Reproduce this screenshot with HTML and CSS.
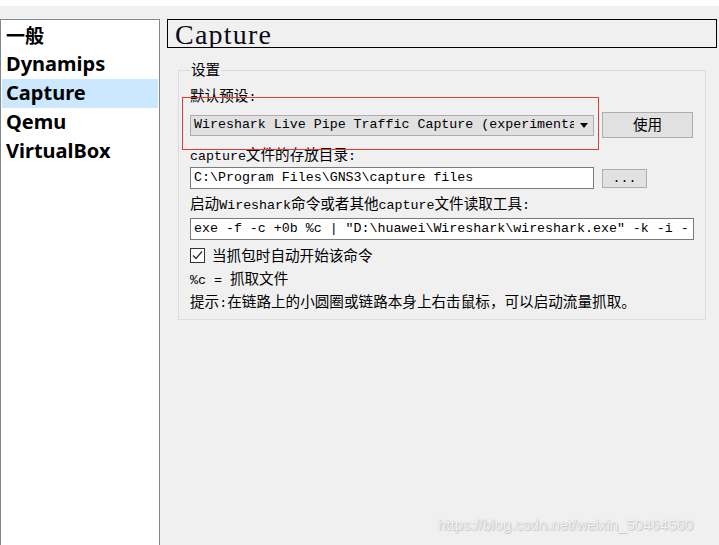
FILE: index.html
```html
<!DOCTYPE html>
<html lang="zh-CN">
<head>
<meta charset="utf-8">
<title>GNS3 Preferences - Capture</title>
<link rel="stylesheet" href="styles.css">
</head>
<body>
<div class="topbar"></div>
<div class="main">
  <ul class="nav">
    <li class="nav-item cjk-bold">一般</li>
    <li class="nav-item">Dynamips</li>
    <li class="nav-item sel">Capture</li>
    <li class="nav-item">Qemu</li>
    <li class="nav-item">VirtualBox</li>
  </ul>
  <section class="panel">
    <div class="title">Capture</div>
    <fieldset class="group">
      <legend class="legend"><span class="z">设置</span></legend>
      <div class="lbl lbl-preset"><span class="z">默认预设</span>:</div>
      <div class="row row-preset">
        <div class="combo">
          <span class="combo-text">Wireshark Live Pipe Traffic Capture (experimental)</span>
          <svg class="arrow" width="8" height="5" viewBox="0 0 8 5"><path d="M0 0H8L4 5Z" fill="#000"/></svg>
        </div>
        <button class="btn btn-use"><span class="z">使用</span></button>
      </div>
      <div class="lbl lbl-dir">capture<span class="z">文件的存放目录</span>:</div>
      <div class="row row-dir">
        <div class="input input-dir">C:\Program Files\GNS3\capture files</div>
        <button class="btn btn-browse">...</button>
      </div>
      <div class="lbl lbl-cmd"><span class="z">启动</span>Wireshark<span class="z">命令或者其他</span>capture<span class="z">文件读取工具</span>:</div>
      <div class="input input-cmd">exe -f -c +0b %c | ″D:\huawei\Wireshark\wireshark.exe″ -k -i -</div>
      <label class="check-row">
        <span class="checkbox"><svg width="13" height="13" viewBox="0 0 13 13"><path d="M2 6.5L5 9.5L11 2.5" fill="none" stroke="#333" stroke-width="1.4"/></svg></span>
        <span class="z">当抓包时自动开始该命令</span>
      </label>
      <div class="lbl lbl-pc">%c = <span class="z">抓取文件</span></div>
      <div class="lbl lbl-tip"><span class="z">提示</span>:<span class="z">在链路上的小圆圈或链路本身上右击鼠标，可以启动流量抓取。</span></div>
    </fieldset>
  </section>
</div>
<div class="annot"></div>
<div class="watermark">https://blog.csdn.net/weixin_50464560</div>
</body>
</html>
```

FILE: styles.css
```css
html, body {
  margin: 0;
  padding: 0;
  width: 719px;
  height: 545px;
  overflow: hidden;
  background: #f0f0f0;
}
body {
  position: relative;
  font-family: "Liberation Mono", "Noto Sans CJK SC", monospace;
  font-size: 13.3px;
  line-height: 18px;
  color: #000;
}
.topbar {
  height: 6px;
  background: #fff;
}
.main {
  display: flex;
  gap: 7px;
  padding-top: 13px;
}
.nav {
  list-style: none;
  margin: 0;
  padding: 1px;
  height: 540px;
  flex: none;
  box-sizing: border-box;
  width: 160px;
  background: #fff;
  border: 1px solid #828790;
  font-family: "Noto Sans", "Noto Sans CJK SC", sans-serif;
  font-weight: 700;
  font-size: 20px;
}
.nav-item {
  height: 29px;
  line-height: 28px;
  padding-left: 4px;
}
.cjk-bold {
  font-family: "Noto Sans CJK SC", sans-serif;
  font-size: 19px;
}
.nav-item.sel {
  background: #cce8ff;
}
.panel {
  width: 550px;
  flex: none;
}
.title {
  box-sizing: border-box;
  height: 29px;
  border: 1px solid #000;
  padding-left: 7px;
  font-family: "Liberation Serif", serif;
  font-size: 28px;
  letter-spacing: 1.2px;
  line-height: 29px;
  overflow: hidden;
  color: #0a0a1a;
}
.group {
  margin: 13px 11px 0 11px;
  padding: 6px 11px 9px 11px;
  border: 1px solid #dcdcdc;
  min-width: 0;
}
.legend {
  padding: 0 1px;
  line-height: 16px;
}
.z {
  font-family: "Noto Sans CJK SC", sans-serif;
  font-size: 14.6px;
}
.lbl {
  height: 18px;
  white-space: nowrap;
}
.row {
  display: flex;
  gap: 8px;
}
.row-preset {
  margin-top: 8px;
  align-items: center;
  height: 26px;
}
.combo {
  box-sizing: border-box;
  width: 404px;
  height: 21px;
  background: #e1e1e1;
  border: 1px solid #adadad;
  display: flex;
  align-items: center;
  padding-left: 3px;
  gap: 6px;
}
.combo-text {
  width: 380px;
  overflow: hidden;
  white-space: nowrap;
}
.arrow {
  flex: none;
}
.btn {
  box-sizing: border-box;
  background: #e1e1e1;
  border: 1px solid #adadad;
  padding: 0;
  margin: 0;
  font: inherit;
  color: #000;
}
.btn-use {
  width: 91px;
  height: 26px;
}
.lbl-dir {
  margin-top: 7px;
}
.row-dir {
  margin-top: 4px;
  align-items: center;
  height: 22px;
}
.input {
  box-sizing: border-box;
  height: 22px;
  background: #fff;
  border: 1px solid #7a7a7a;
  padding-left: 3px;
  line-height: 20px;
  white-space: nowrap;
  overflow: hidden;
}
.input-dir {
  width: 404px;
}
.btn-browse {
  width: 45px;
  height: 19px;
  line-height: 17px;
}
.lbl-cmd {
  margin-top: 5px;
}
.input-cmd {
  margin-top: 6px;
  width: 504px;
}
.check-row {
  margin-top: 6px;
  display: flex;
  align-items: center;
  gap: 7px;
  height: 18px;
}
.checkbox {
  box-sizing: border-box;
  width: 15px;
  height: 15px;
  border: 1px solid #333;
  background: #fff;
  display: flex;
  align-items: center;
  justify-content: center;
}
.lbl-pc {
  margin-top: 5px;
}
.lbl-tip {
  margin-top: 5px;
}
.annot {
  position: absolute;
  left: 182px;
  top: 97px;
  width: 415px;
  height: 51px;
  border: 1px solid #e53935;
}
.watermark {
  position: absolute;
  left: 438px;
  top: 515px;
  font-family: "Liberation Sans", sans-serif;
  font-size: 15px;
  line-height: 20px;
  color: #f4f4f4;
  text-shadow: 0 0 1px #b0b0b0, 1px 1px 1px #c8c8c8;
}
```
